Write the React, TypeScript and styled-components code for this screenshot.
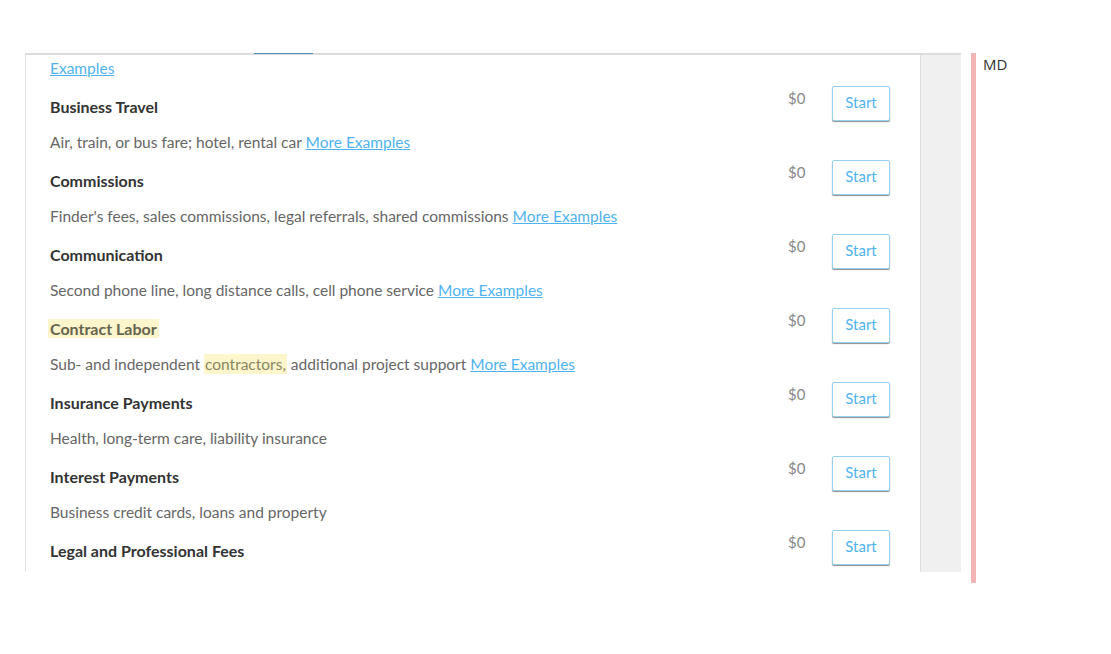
import styled, { createGlobalStyle } from 'styled-components'

const GlobalStyle = createGlobalStyle`
  html, body {
    margin: 0;
    padding: 0;
    background: #fff;
  }
`

type Expense = {
  title: string
  description?: string
  examples?: boolean
  highlight?: boolean
}

const expenses: Expense[] = [
  { title: 'Business Travel', description: 'Air, train, or bus fare; hotel, rental car', examples: true },
  {
    title: 'Commissions',
    description: "Finder's fees, sales commissions, legal referrals, shared commissions",
    examples: true,
  },
  {
    title: 'Communication',
    description: 'Second phone line, long distance calls, cell phone service',
    examples: true,
  },
  { title: 'Contract Labor', examples: true, highlight: true },
  { title: 'Insurance Payments', description: 'Health, long-term care, liability insurance' },
  { title: 'Interest Payments', description: 'Business credit cards, loans and property' },
  { title: 'Legal and Professional Fees' },
]

const Page = styled.div`
  display: flex;
  align-items: flex-start;
  padding: 53px 0 0 25px;
  font-family: Lato, 'Open Sans', sans-serif;
`

const Frame = styled.div`
  position: relative;
  display: flex;
  height: 517px;
  border-top: 2px solid #dcdcdc;
`

const TabMarker = styled.div`
  position: absolute;
  top: -2px;
  left: 229px;
  width: 59px;
  height: 1px;
  background: #4a8fb5;
`

const Panel = styled.div`
  width: 870px;
  padding: 0 0 0 24px;
  border-left: 1px solid #e4e4e4;
  background: #fff;
  overflow: hidden;
`

const Gutter = styled.div`
  width: 40px;
  background: #f0f0f0;
  border-left: 1px solid #dedede;
`

const SideBar = styled.div`
  width: 5px;
  height: 530px;
  margin-left: 10px;
  background: #f2b4b4;
`

const User = styled.div`
  margin: 1px 0 0 7px;
  font-family: 'Open Sans', sans-serif;
  font-size: 15px;
  color: #333;
`

const Tail = styled.div`
  height: 28px;
  padding-top: 3px;
  font-size: 15.5px;
  line-height: 20px;
`

const Row = styled.div`
  display: flex;
  height: 74px;
  padding-right: 30px;
`

const Info = styled.div`
  flex: 1;
  padding-top: 11px;
`

const Title = styled.div<{ $highlight?: boolean }>`
  font-size: 16px;
  font-weight: 700;
  line-height: 20px;
  color: #333;

  span {
    padding: 0 2px;
    margin-left: -2px;
    background: ${p => (p.$highlight ? '#fdf5cc' : 'transparent')};
    color: ${p => (p.$highlight ? '#66654f' : 'inherit')};
  }
`

const Description = styled.div`
  margin-top: 15px;
  font-size: 15.5px;
  line-height: 20px;
  color: #666;
`

const Mark = styled.span`
  background: #fdf5cc;
  color: #8a8760;
  padding: 1px 1px;
`

const Link = styled.a`
  color: #4fb3f0;
  text-decoration: underline;
  cursor: pointer;
`

const Amount = styled.div`
  padding-top: 2px;
  width: 44px;
  font-size: 15px;
  line-height: 20px;
  color: #888;
`

const StartButton = styled.button`
  width: 58px;
  height: 35px;
  padding: 0 0 3px;
  background: #fff;
  border: 1px solid #96d2f0;
  border-radius: 2px;
  box-shadow: 0 1px 1px rgba(0, 0, 0, 0.45);
  font-family: Lato, 'Open Sans', sans-serif;
  font-size: 15px;
  color: #4fb3f0;
  cursor: pointer;
`

const App = () => {
  return (
    <>
      <GlobalStyle />
      <Page>
        <Frame>
          <TabMarker />
          <Panel>
            <Tail>
              <Link>Examples</Link>
            </Tail>
            {expenses.map(item => (
              <Row key={item.title}>
                <Info>
                  <Title $highlight={item.highlight}>
                    <span>{item.title}</span>
                  </Title>
                  {(item.description || item.highlight) && (
                    <Description>
                      {item.highlight ? (
                        <>
                          Sub- and independent <Mark>contractors,</Mark> additional project support
                        </>
                      ) : (
                        item.description
                      )}
                      {item.examples && (
                        <>
                          {' '}
                          <Link>More Examples</Link>
                        </>
                      )}
                    </Description>
                  )}
                </Info>
                <Amount>$0</Amount>
                <StartButton>Start</StartButton>
              </Row>
            ))}
          </Panel>
          <Gutter />
        </Frame>
        <SideBar />
        <User>MD</User>
      </Page>
    </>
  )
}

export default App
